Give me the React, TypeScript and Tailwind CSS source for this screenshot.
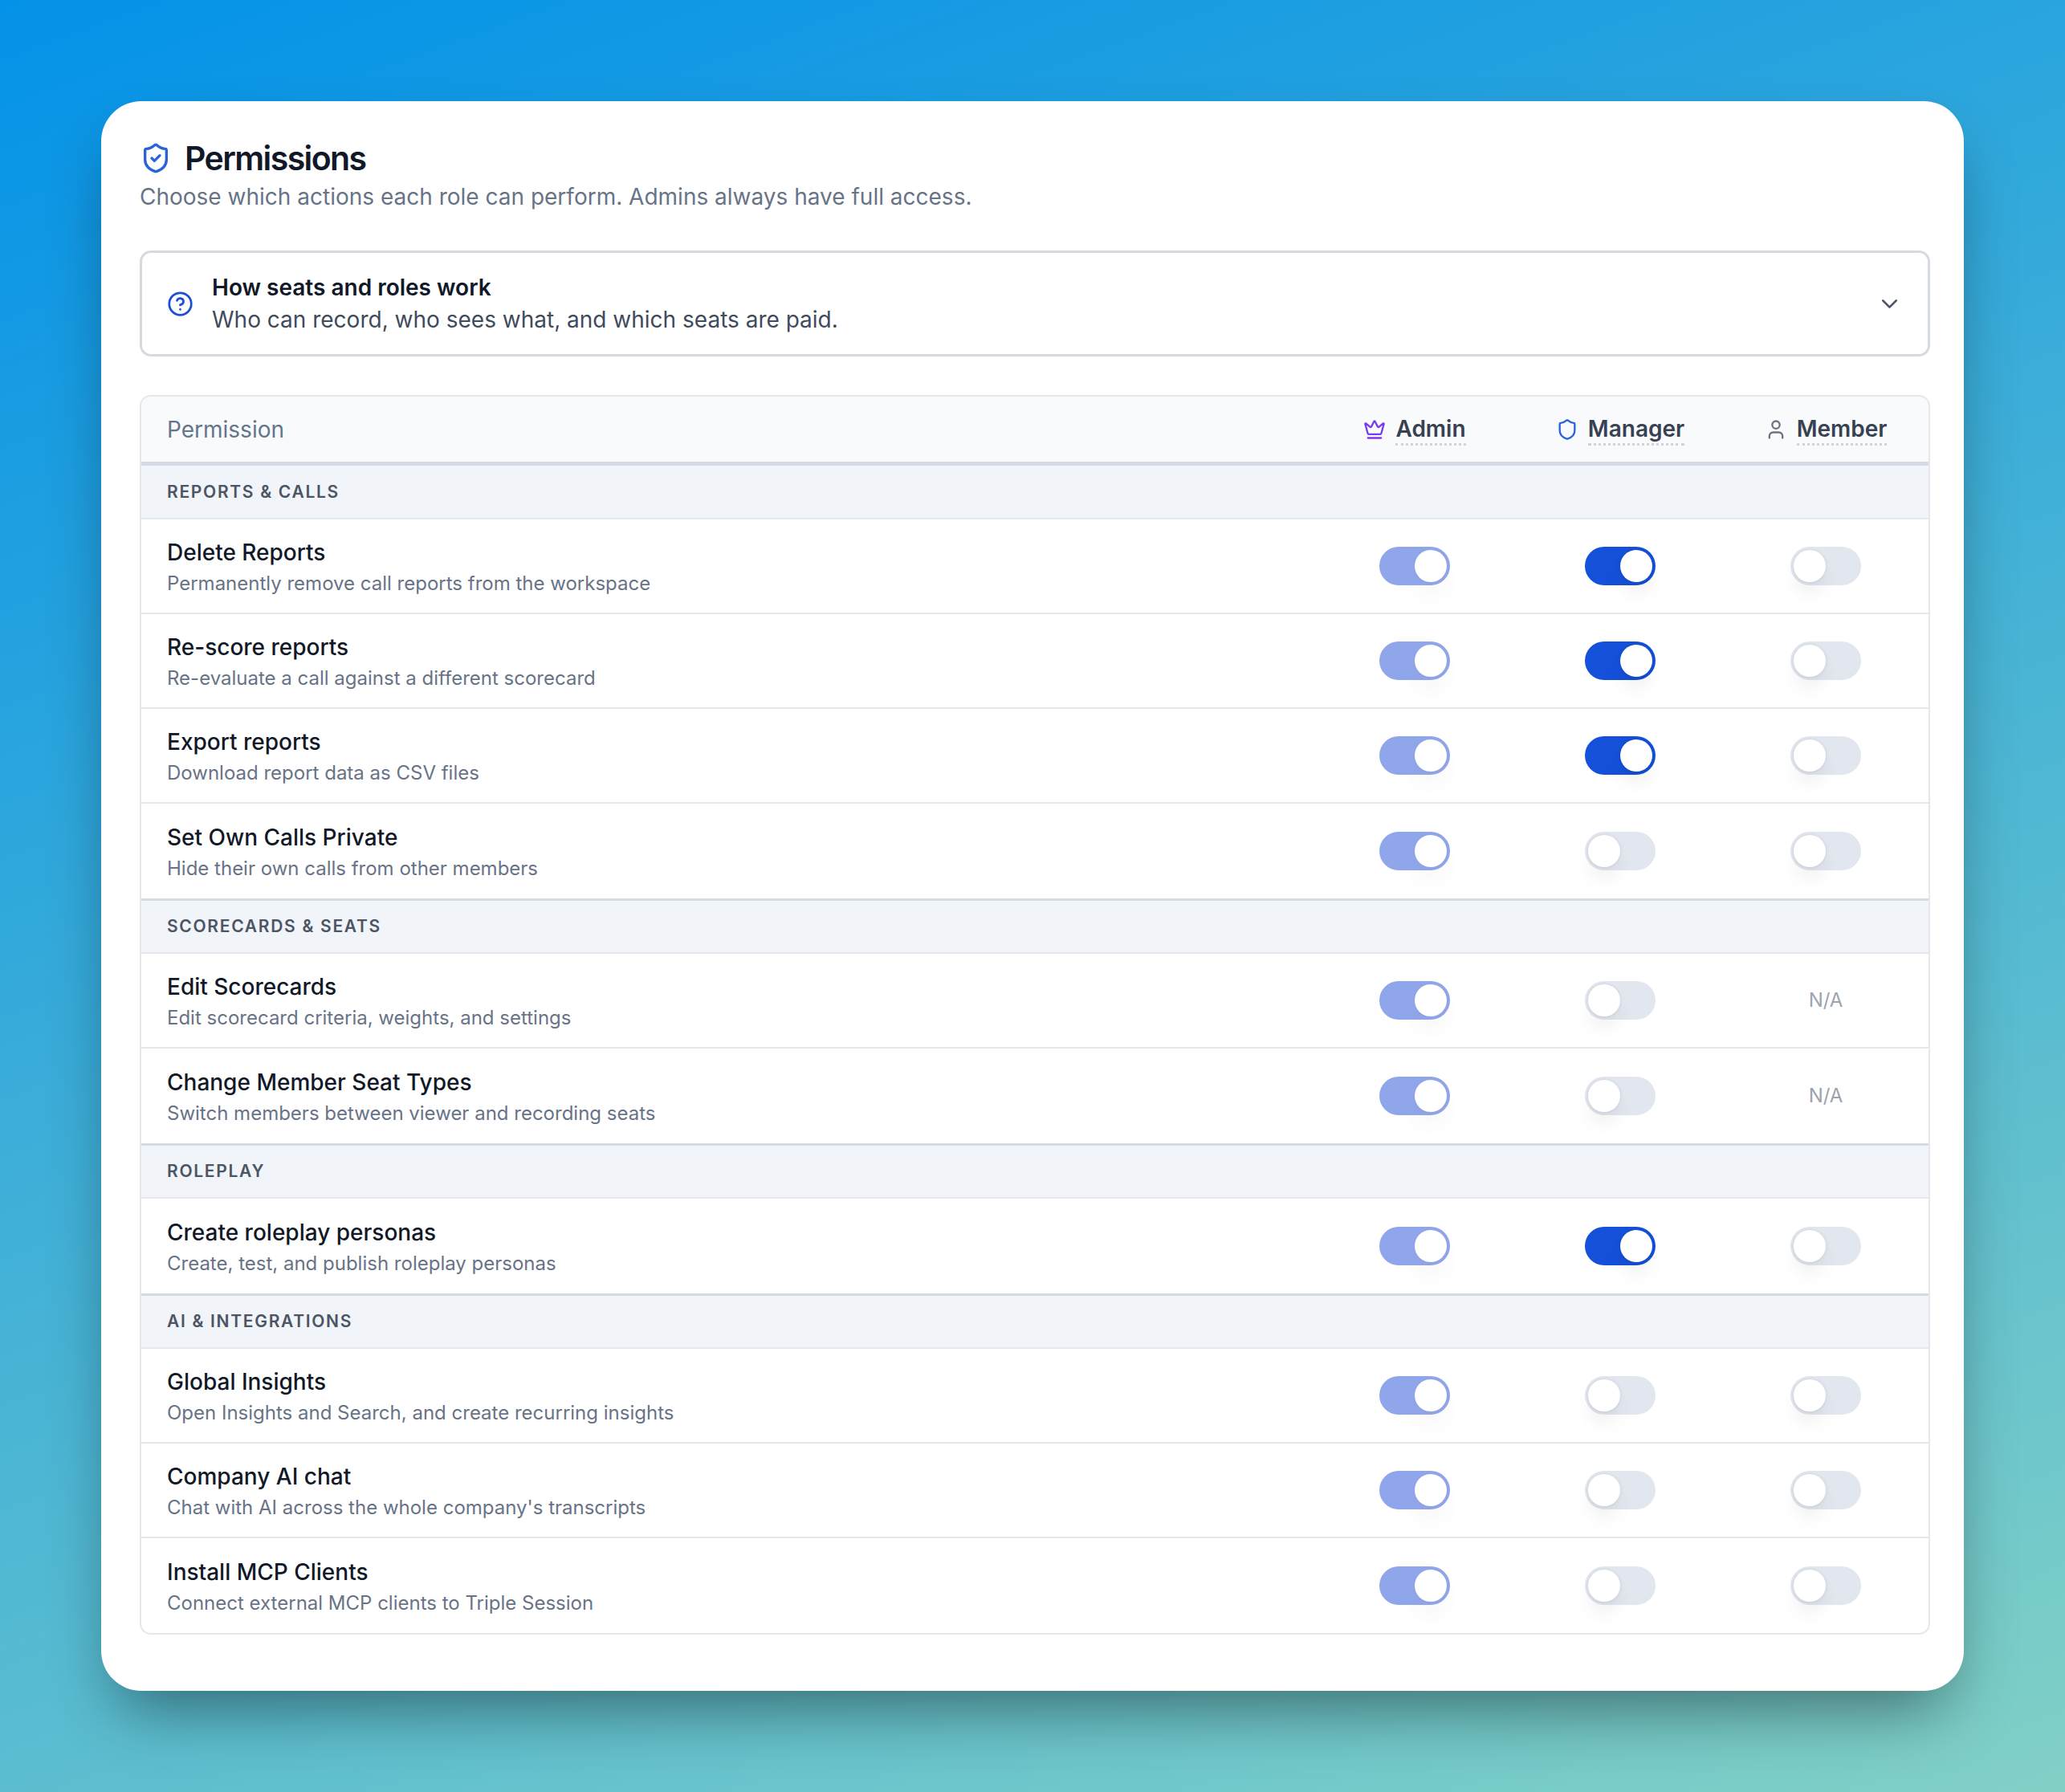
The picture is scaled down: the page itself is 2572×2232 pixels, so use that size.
import { ChevronDown, CircleHelp, Crown, Shield, ShieldCheck, User } from 'lucide-react'

type Cell = 'on' | 'off' | 'na'

type Perm = {
  title: string
  desc: string
  manager: Cell
  member: Cell
}

const sections: { name: string; height: string; perms: Perm[] }[] = [
  {
    name: 'Reports & Calls',
    height: 'h-[67px]',
    perms: [
      { title: 'Delete Reports', desc: 'Permanently remove call reports from the workspace', manager: 'on', member: 'off' },
      { title: 'Re-score reports', desc: 'Re-evaluate a call against a different scorecard', manager: 'on', member: 'off' },
      { title: 'Export reports', desc: 'Download report data as CSV files', manager: 'on', member: 'off' },
      { title: 'Set Own Calls Private', desc: 'Hide their own calls from other members', manager: 'off', member: 'off' },
    ],
  },
  {
    name: 'Scorecards & Seats',
    height: 'h-[69px]',
    perms: [
      { title: 'Edit Scorecards', desc: 'Edit scorecard criteria, weights, and settings', manager: 'off', member: 'na' },
      { title: 'Change Member Seat Types', desc: 'Switch members between viewer and recording seats', manager: 'off', member: 'na' },
    ],
  },
  {
    name: 'Roleplay',
    height: 'h-[69px]',
    perms: [
      { title: 'Create roleplay personas', desc: 'Create, test, and publish roleplay personas', manager: 'on', member: 'off' },
    ],
  },
  {
    name: 'AI & Integrations',
    height: 'h-[69px]',
    perms: [
      { title: 'Global Insights', desc: 'Open Insights and Search, and create recurring insights', manager: 'off', member: 'off' },
      { title: 'Company AI chat', desc: "Chat with AI across the whole company's transcripts", manager: 'off', member: 'off' },
      { title: 'Install MCP Clients', desc: 'Connect external MCP clients to Triple Session', manager: 'off', member: 'off' },
    ],
  },
]

const Toggle = ({ on, locked }: { on: boolean; locked?: boolean }) => (
  <div
    className={`flex h-[48px] w-[88px] items-center rounded-full p-[4px] ${on ? 'justify-end' : 'justify-start bg-[#e2e6ef]'} ${on && locked ? 'bg-[#2450d9] opacity-50' : ''} ${on && !locked ? 'bg-[#1450d9]' : ''}`}
  >
    <div className="h-[40px] w-[40px] rounded-full bg-white shadow-[0_0_4px_rgba(0,0,0,0.1),0_16px_24px_-4px_rgba(0,0,0,0.08)]" />
  </div>
)

const RoleHead = ({ label, icon }: { label: string; icon: React.ReactNode }) => (
  <div className="flex items-center justify-center gap-[12px]">
    {icon}
    <span className="border-b-[3px] border-dotted border-[#d1d5db] pt-[3px] text-[28px] leading-[35px] font-semibold text-[#374151]">{label}</span>
  </div>
)

const App = () => {
  return (
    <div className="flex min-h-[2232px] w-full bg-[linear-gradient(160deg,#0492e8,#81d0c6)] p-[126px] font-['Inter',sans-serif]">
      <div className="h-[1980px] w-[2320px] rounded-[50px] bg-white pt-[50px] pr-[42px] pl-[48px] shadow-[0_41px_82px_-20px_rgba(0,0,0,0.45)]">
        <div className="flex h-[42px] items-center gap-[16px]">
          <ShieldCheck className="h-[40px] w-[40px] text-[#2a62dc]" strokeWidth={2} />
          <h1 className="text-[41px] leading-[42px] font-semibold tracking-[-1.6px] text-[#111827]">Permissions</h1>
        </div>
        <p className="mt-[7px] text-[28px] leading-[40px] text-[#687387]">
          Choose which actions each role can perform. Admins always have full access.
        </p>

        <div className="mt-[47px] flex h-[132px] items-center gap-[23px] rounded-[14px] border-[3px] border-[#d5d9e0] pr-[31px] pl-[31px]">
          <CircleHelp className="h-[33px] w-[33px] text-[#1d4ed8]" />
          <div className="flex-1">
            <div className="text-[28px] leading-[40px] font-semibold text-[#111827]">How seats and roles work</div>
            <div className="text-[28px] leading-[40px] text-[#3f4a5c]">Who can record, who sees what, and which seats are paid.</div>
          </div>
          <ChevronDown className="h-[33px] w-[33px] text-[#4b5563]" />
        </div>

        <div className="mt-[48px] overflow-hidden rounded-[14px] border-2 border-[#e5e7eb]">
          <div className="grid h-[86px] grid-cols-[1fr_256px_256px_256px] items-center border-b-[5px] border-[#d5dae5] bg-[#f9fafb]">
            <div className="pl-[32px] text-[28px] text-[#64748b]">Permission</div>
            <RoleHead label="Admin" icon={<Crown className="h-[28px] w-[28px] text-[#7c3aed]" />} />
            <RoleHead label="Manager" icon={<Shield className="h-[28px] w-[28px] text-[#2a62dc]" />} />
            <RoleHead label="Member" icon={<User className="h-[28px] w-[28px] text-[#6b7280]" />} />
          </div>

          {sections.map((section, i) => (
            <div key={section.name}>
              <div
                className={`flex items-center border-b-2 border-[#e5e7eb] bg-[#f1f4f9] pl-[32px] text-[21px] font-semibold tracking-[1.7px] text-[#4b5563] uppercase ${section.height} ${i > 0 ? 'border-t-[3px] border-t-[#d5dae5]' : ''}`}
              >
                {section.name}
              </div>
              {section.perms.map((perm, j) => (
                <div
                  key={perm.title}
                  className={`grid h-[118px] grid-cols-[1fr_256px_256px_256px] items-center ${j < section.perms.length - 1 ? 'border-b-2 border-[#e5e7eb]' : ''}`}
                >
                  <div className="pt-[2px] pl-[32px]">
                    <div className="text-[28px] leading-[38px] font-medium text-[#111827]">{perm.title}</div>
                    <div className="mt-[3px] text-[24px] leading-[34px] text-[#687387]">{perm.desc}</div>
                  </div>
                  <div className="flex justify-center">
                    <Toggle on locked />
                  </div>
                  <div className="flex justify-center">
                    <Toggle on={perm.manager === 'on'} />
                  </div>
                  <div className="flex justify-center">
                    {perm.member === 'na' ? (
                      <span className="text-[24px] text-[#9ca3af]">N/A</span>
                    ) : (
                      <Toggle on={false} />
                    )}
                  </div>
                </div>
              ))}
            </div>
          ))}
        </div>
      </div>
    </div>
  )
}

export default App
